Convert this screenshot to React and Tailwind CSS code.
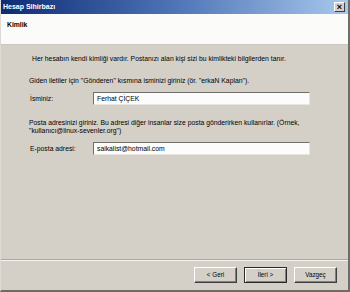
import React from "react";

const font = { fontFamily: '"Liberation Sans", Arial, sans-serif' };

const Field = ({ label, value }) => (
    <div className="flex items-center mt-[7px]">
        <span className="w-[92px] pl-[29px] shrink-0 whitespace-nowrap">{label}</span>
        <div className="w-[217px] h-[13px] bg-[#fbfcfb] border-t border-l border-t-[#6f6f6b] border-l-[#6f6f6b] border-b border-r border-b-[#e8e6e0] border-r-[#e8e6e0] flex items-center pl-[3px]">
            {value}
        </div>
    </div>
);

const WizButton = ({ children, primary }) => (
    <button
        className={
            "w-[43px] h-[16px] bg-[#d4d0c8] flex items-center justify-center text-[6.3px] text-black " +
            (primary
                ? "border border-[#2a2a2a] shadow-[inset_1px_1px_0_#fff,inset_-1px_-1px_0_#808080]"
                : "border border-t-[#fff] border-l-[#fff] border-b-[#404040] border-r-[#404040] shadow-[inset_-1px_-1px_0_#808080]")
        }
    >
        {children}
    </button>
);

export default function App() {
    return (
        <div
            style={font}
            className="w-[350px] h-[292px] bg-[#d4d0c8] flex flex-col border-l border-l-[#dcdad4] border-r-2 border-b-2 border-r-[#6d6c68] border-b-[#6d6c68] text-[6.8px] leading-[8px] text-black overflow-hidden"
        >
            {/* title bar */}
            <div className="h-[14px] shrink-0 flex items-center justify-between pl-[2px] pr-[3px] bg-gradient-to-r from-[#0e2b74] via-[#4f74b6] to-[#a8c8ec]">
                <span className="text-white font-bold text-[7px]">Hesap Sihirbazı</span>
                <div className="w-[11px] h-[10px] bg-[#d4d0c8] border border-t-white border-l-white border-b-[#404040] border-r-[#404040] flex items-center justify-center text-[9px] leading-none font-bold">
                    ×
                </div>
            </div>

            {/* header */}
            <div className="h-[31px] shrink-0 bg-[#fbfcfa] border-b border-b-[#c8c6c0] flex items-center pl-[6px] pb-[8px]">
                <span className="font-bold text-[6.8px]">Kimlik</span>
            </div>

            {/* body */}
            <div className="flex-1 flex flex-col">
                <p className="pl-[31px] mt-[10px]">
                    Her hesabın kendi kimliği vardır. Postanızı alan kişi sizi bu kimlikteki bilgilerden tanır.
                </p>
                <p className="pl-[28px] mt-[14px]">
                    Giden iletiler için "Gönderen" kısmına isminizi giriniz (ör. "erkaN Kaplan").
                </p>
                <Field label="İsminiz:" value="Ferhat ÇİÇEK" />
                <p className="pl-[28px] mt-[14px] pr-[8px]">
                    Posta adresinizi giriniz. Bu adresi diğer insanlar size posta gönderirken kullanırlar. (Örnek, "kullanıcı@linux-sevenler.org")
                </p>
                <Field label="E-posta adresi:" value="saikalist@hotmail.com" />
            </div>

            {/* footer */}
            <div className="h-[31px] shrink-0 border-t border-t-[#a9a8a4] shadow-[inset_0_1px_0_#f4f3f0] flex items-start justify-end gap-[7px] pt-[7px] pr-[11px]">
                <WizButton>&lt; Geri</WizButton>
                <WizButton primary>İleri &gt;</WizButton>
                <WizButton>Vazgeç</WizButton>
            </div>
        </div>
    );
}
